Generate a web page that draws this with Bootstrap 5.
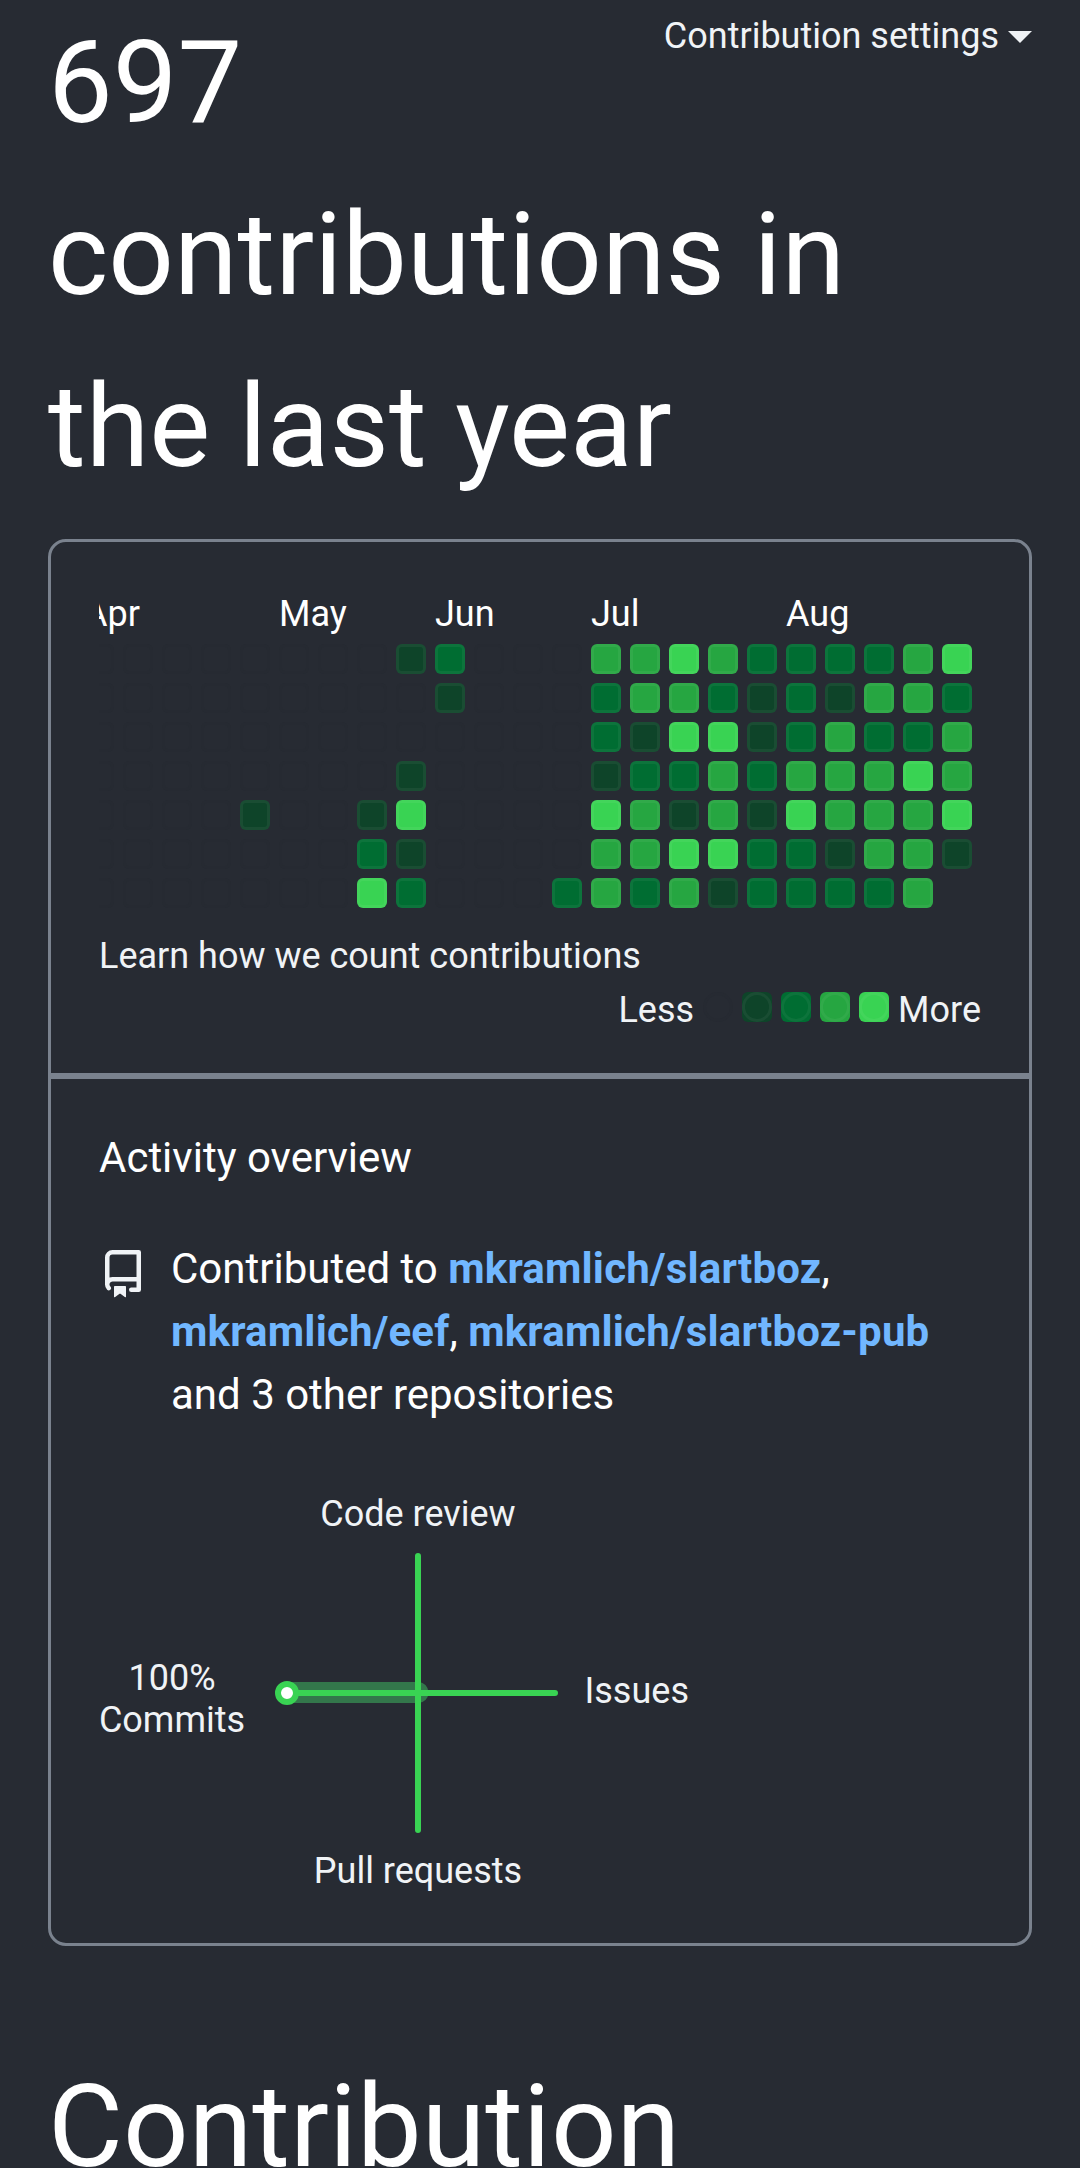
<!DOCTYPE html>
<html lang="en">
<head>
<meta charset="utf-8">
<meta name="viewport" content="width=device-width, initial-scale=1">
<title>Contributions</title>
<link href="https://cdn.jsdelivr.net/npm/bootstrap@5.3.0/dist/css/bootstrap.min.css" rel="stylesheet">
<style>
  html, body { height: 2168px; overflow: hidden; }
  body { background: #272b33; color: #fff; font-family: Roboto, "Liberation Sans", sans-serif; font-size: 36px; line-height: 54px; }
  .page { padding: 0 48px; }
  .muted { color: #f0f3f6; }
  .headline { font-size: 115.2px; line-height: 172.2px; font-weight: 400; margin: 0; }
  .top-area { height: 539px; }
  .top-area .headline { margin-top: -3px; width: 800px; }
  .settings { margin: 9px 0 0 -200px; gap: 9px; height: 54px; white-space: nowrap; }
  .settings svg { width: 24px; height: 12px; margin-top: 2px; }
  .panel { border: 3px solid #7a828e; border-radius: 18px; height: 1407px; }
  .calendar { height: 537px; border-bottom: 6px solid #7a828e; padding: 45px 48px 0; }
  .clip { height: 328px; margin-bottom: 14px; overflow: hidden; }
  .clip > div { margin-left: -15px; }
  .months, .days { display: grid; grid-template-columns: repeat(23, 30px); column-gap: 9px; }
  .months { height: 57px; grid-auto-flow: column; }
  .months span { width: 100px; white-space: nowrap; }
  .days { grid-template-rows: repeat(7, 30px); row-gap: 9px; grid-auto-flow: column; }
  .day { width: 30px; height: 30px; border-radius: 6px; border: 3px solid rgba(255,255,255,.05); }
  .lv0 { border-color: #262a32; }
  .lv1 { background-color: #0e4429; }
  .lv2 { background-color: #006d32; }
  .lv3 { background-color: #26a641; }
  .lv4 { background-color: #39d353; }
  .legend { gap: 9px; height: 54px; }
  .legend .swatch { width: 30px; height: 30px; border-radius: 6px; margin-top: 9px; }
  .swatch::after { content: ""; display: block; width: 30px; height: 30px; border-radius: 50%; border: 3px solid rgba(255,255,255,.05); }
  .swatch.lv0::after { border-color: #262a32; }
  .overview { padding: 47px 48px 0; font-size: 42px; line-height: 63px; }
  .overview a { color: #71b7ff; font-weight: 700; text-decoration: none; letter-spacing: .19px; }
  .repo-icon { width: 48px; height: 48px; margin: 13px 24px 0 0; fill: #f0f3f6; }
  .contrib { margin-top: 48px; }
  .radar { display: block; margin-top: 54px; }
  .radar text { font-size: 36px; fill: #f0f3f6; }
  .next-title { margin-top: 95px; }
</style>
<script src="https://cdn.jsdelivr.net/npm/bootstrap@5.3.0/dist/js/bootstrap.bundle.min.js"></script>
</head>
<body>
<main class="page">
  <header class="top-area d-flex justify-content-between align-items-start">
    <h2 class="headline">697<br>contributions in<br>the last year</h2>
    <div class="settings muted d-flex align-items-center">
      <span>Contribution settings</span>
      <svg viewBox="0 0 24 12"><path d="M0 0h24L12 12z" fill="#f0f3f6"/></svg>
    </div>
  </header>
  <section class="panel">
    <div class="calendar">
      <div class="clip">
        <div class="months">
          <span style="grid-column:1">Apr</span><span style="grid-column:6">May</span><span style="grid-column:10">Jun</span><span style="grid-column:14">Jul</span><span style="grid-column:19">Aug</span>
        </div>
        <div class="days" id="days"></div>
      </div>
      <div class="muted">Learn how we count contributions</div>
      <div class="legend muted d-flex justify-content-end">
        <span>Less</span>
        <span class="swatch lv0"></span><span class="swatch lv1"></span><span class="swatch lv2"></span><span class="swatch lv3"></span><span class="swatch lv4"></span>
        <span>More</span>
      </div>
    </div>
    <div class="overview">
      <div>Activity overview</div>
      <div class="contrib d-flex">
        <svg class="repo-icon flex-shrink-0" viewBox="0 0 16 16"><path fill-rule="evenodd" d="M2 2.5A2.5 2.5 0 014.5 0h8.75a.75.75 0 01.75.75v12.5a.75.75 0 01-.75.75h-2.5a.75.75 0 110-1.5h1.75v-2h-8a1 1 0 00-.714 1.7.75.75 0 01-1.072 1.05A2.495 2.495 0 012 11.5v-9zm10.5-1V9h-8c-.356 0-.694.074-1 .208V2.5a1 1 0 011-1h8zM5 12.25v3.25a.25.25 0 00.4.2l1.45-1.087a.25.25 0 01.3 0L8.6 15.7a.25.25 0 00.4-.2v-3.25a.25.25 0 00-.25-.25h-3.5a.25.25 0 00-.25.25z"/></svg>
        <div>Contributed to <a href="#">mkramlich/slartboz</a>,<br><a href="#">mkramlich/eef</a>, <a href="#">mkramlich/slartboz-pub</a><br>and 3 other repositories</div>
      </div>
      <svg class="radar" width="640" height="430" viewBox="99 1480 640 430">
        <path d="M287 1692.5H418" stroke="#40c463" stroke-opacity=".5" stroke-width="21" stroke-linecap="round"/>
        <path d="M418 1556V1830M287 1693H555" stroke="#39d353" stroke-width="6" stroke-linecap="round"/>
        <circle cx="287" cy="1693" r="9" fill="#fff" stroke="#39d353" stroke-width="6"/>
        <text x="418" y="1526" text-anchor="middle">Code review</text>
        <text x="172" y="1690" text-anchor="middle">100%</text>
        <text x="172" y="1732" text-anchor="middle">Commits</text>
        <text x="584.5" y="1703">Issues</text>
        <text x="418" y="1883" text-anchor="middle">Pull requests</text>
      </svg>
    </div>
  </section>
  <h2 class="headline next-title">Contribution</h2>
</main>
<script>
  // One string per week, Sunday to Saturday, each digit is the activity level.
  const weeks = ['0000000','0000000','0000000','0000000','0000100','0000000','0000000','0000124','1001412','2100000',
    '0000000','0000000','0000002','3221433','3312332','4342143','3243341','2112122','2223422','2133312','2323332','3324333','423341'];
  document.getElementById('days').innerHTML =
    weeks.map(w => [...w].map(l => `<span class="day lv${l}"></span>`).join('')).join('');
</script>
</body>
</html>
